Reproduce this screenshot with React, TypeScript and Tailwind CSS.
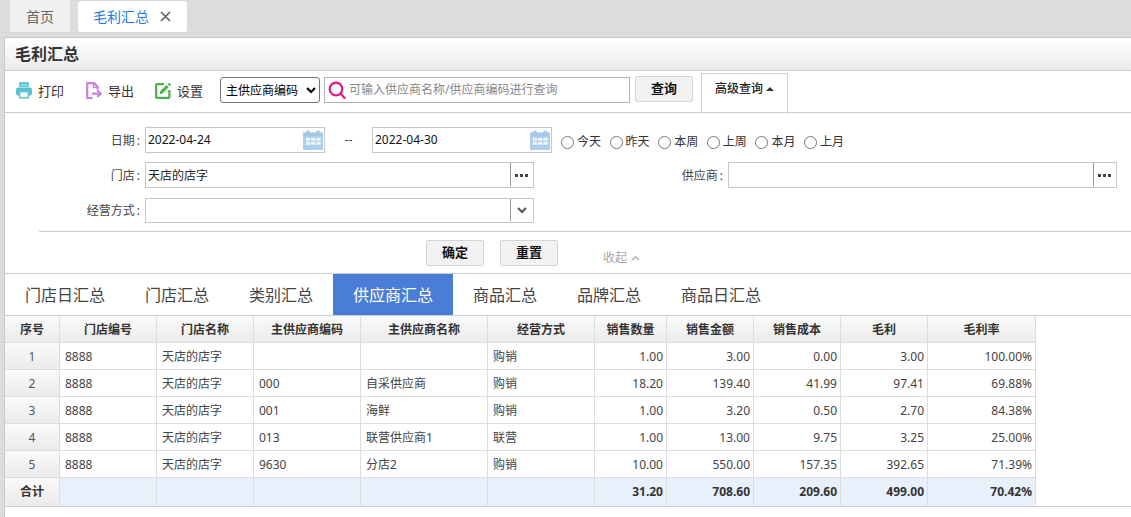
const columns = [
  { title: "序号", width: "w-[55px]" },
  { title: "门店编号", width: "w-[97px]" },
  { title: "门店名称", width: "w-[97px]" },
  { title: "主供应商编码", width: "w-[107px]" },
  { title: "主供应商名称", width: "w-[127px]" },
  { title: "经营方式", width: "w-[107px]" },
  { title: "销售数量", width: "w-[72px]" },
  { title: "销售金额", width: "w-[87px]" },
  { title: "销售成本", width: "w-[87px]" },
  { title: "毛利", width: "w-[87px]" },
  { title: "毛利率", width: "w-[108px]" },
];

const rows = [
  ["1", "8888", "天店的店字", "", "", "购销", "1.00", "3.00", "0.00", "3.00", "100.00%"],
  ["2", "8888", "天店的店字", "000", "自采供应商", "购销", "18.20", "139.40", "41.99", "97.41", "69.88%"],
  ["3", "8888", "天店的店字", "001", "海鲜", "购销", "1.00", "3.20", "0.50", "2.70", "84.38%"],
  ["4", "8888", "天店的店字", "013", "联营供应商1", "联营", "1.00", "13.00", "9.75", "3.25", "25.00%"],
  ["5", "8888", "天店的店字", "9630", "分店2", "购销", "10.00", "550.00", "157.35", "392.65", "71.39%"],
];

const totals = ["合计", "", "", "", "", "", "31.20", "708.60", "209.60", "499.00", "70.42%"];

const tabs = [
  { label: "门店日汇总" },
  { label: "门店汇总" },
  { label: "类别汇总" },
  { label: "供应商汇总", active: true },
  { label: "商品汇总" },
  { label: "品牌汇总" },
  { label: "商品日汇总" },
];

const PrinterIcon = () => (
  <svg width="16" height="17" viewBox="0 0 16 17" className="shrink-0">
    <path d="M3 5V1.5A1.5 1.5 0 0 1 4.5 0h7A1.5 1.5 0 0 1 13 1.5V5z" fill="#5bc2d1" />
    <rect x="0" y="5.6" width="16" height="7.8" rx="2" fill="#5bc2d1" />
    <rect x="3.6" y="9.6" width="8.8" height="6.2" fill="#fff" stroke="#5bc2d1" strokeWidth="1.4" />
    <rect x="4.2" y="2" width="7.6" height="2.2" fill="#8bd5e0" />
  </svg>
);

const ExportIcon = () => (
  <svg width="16" height="17" viewBox="0 0 16 17" className="shrink-0" fill="none" stroke="#cb80e2" strokeWidth="2.2">
    <path d="M6.5 16H1.2V1.1H8L11.6 4.8V7.5" strokeLinejoin="round" />
    <path d="M7.6 1.5V5.4H11.6" strokeWidth="1.5" />
    <path d="M6 11.6H14.4" />
    <path d="M11.2 8.2L14.8 11.6L11.2 15" />
  </svg>
);

const EditIcon = () => (
  <svg width="16" height="17" viewBox="0 0 16 17" className="shrink-0" fill="none">
    <path d="M9 2.2H2.2A1.2 1.2 0 0 0 1.1 3.4V14.8A1.2 1.2 0 0 0 2.2 15.9H13.3A1.2 1.2 0 0 0 14.4 14.8V8" stroke="#4caf50" strokeWidth="2.3" />
    <path d="M4.5 12.5L5.5 8.8L11.5 3L13.6 5.2L7.8 11.3z" fill="#4caf50" />
    <path d="M12.6 2L14 0.7L16 2.8L14.6 4.2z" fill="#4caf50" />
  </svg>
);

const SearchIcon = () => (
  <svg width="18" height="18" viewBox="0 0 18 18" className="shrink-0" fill="none" stroke="#e3177f" strokeWidth="2.2">
    <circle cx="8" cy="8" r="6.3" />
    <path d="M12.4 12.6L16.6 17" strokeLinecap="round" />
  </svg>
);

const CalendarIcon = () => (
  <svg width="20" height="20" viewBox="0 0 21 23" preserveAspectRatio="none" className="shrink-0">
    <rect x="0" y="3" width="21" height="20" fill="#aecfeb" />
    <rect x="3" y="0.5" width="4" height="5" rx="1" fill="#aecfeb" />
    <rect x="14" y="0.5" width="4" height="5" rx="1" fill="#aecfeb" />
    <rect x="0" y="3" width="21" height="4" fill="#a5c8e6" />
    <g fill="#eef5fb">
      <rect x="3" y="9" width="4.5" height="3.4" />
      <rect x="8.5" y="9" width="4.5" height="3.4" />
      <rect x="14" y="9" width="4.5" height="3.4" />
      <rect x="3" y="13.6" width="4.5" height="3.4" />
      <rect x="8.5" y="13.6" width="4.5" height="3.4" />
      <rect x="14" y="13.6" width="4.5" height="3.4" />
    </g>
  </svg>
);

const DotsButton = () => (
  <div className="flex items-center justify-center w-[23px] h-full relative">
    <div className="absolute left-0 top-0 bottom-[1px] w-px bg-[#999]" />
    <div className="flex gap-[2px]">
      <div className="w-[3px] h-[3px] bg-[#444]" />
      <div className="w-[3px] h-[3px] bg-[#444]" />
      <div className="w-[3px] h-[3px] bg-[#444]" />
    </div>
  </div>
);

const ChevronButton = () => (
  <div className="flex items-center justify-center w-[23px] h-full relative">
    <div className="absolute left-0 top-0 bottom-[1px] w-px bg-[#999]" />
    <svg width="10" height="7" viewBox="0 0 10 7" fill="none" stroke="#555" strokeWidth="2">
      <path d="M1 1L5 5L9 1" />
    </svg>
  </div>
);

const DateInput = ({ value }: { value: string }) => (
  <div className="flex items-center justify-between w-[180px] h-[26px] border border-[#c6c6c6] pl-[2px] pr-px">
    <span className="text-[12px] text-[#111]">{value}</span>
    <CalendarIcon />
  </div>
);

const Radio = ({ label }: { label: string }) => (
  <label className="flex items-center w-[48.6px] text-[12px] text-[#333]">
    <input type="radio" name="range" className="w-[13px] h-[13px] mr-[3px] accent-[#999] mt-px" />
    {label}
  </label>
);

const Button = ({ label, className }: { label: string; className?: string }) => (
  <button className={`w-[58px] h-[26px] rounded-[2px] border border-[#d4d4d4] bg-[#f2f2f2] text-[13px] font-bold text-[#111] ${className ?? ""}`}>
    {label}
  </button>
);

const Label = ({ text, className }: { text: string; className: string }) => (
  <div className={`mr-[5px] pt-px text-right text-[#444] ${className}`}>
    {text}
    <span className="ml-[2px]">:</span>
  </div>
);

const App = () => {
  return (
    <div className="w-full h-[517px] overflow-hidden bg-[#dcdcdc] bg-[repeating-linear-gradient(0deg,#d9d9d9_0px,#d9d9d9_1px,#dfdfdf_1px,#dfdfdf_2px)] font-['Noto_Sans','Noto_Sans_CJK_SC',sans-serif] text-[#333]">
      <div className="flex items-start h-[37px] pl-[10px] gap-[8px]">
        <div className="flex items-center justify-center w-[60px] h-[32px] rounded-b-[3px] bg-[#f0f0f0] text-[14px] text-[#666]">
          首页
        </div>
        <div className="flex items-center w-[109px] h-[31px] mt-px rounded-[3px] bg-white pl-[15px] text-[14px] text-[#1e7be0]">
          毛利汇总
          <svg width="11" height="11" viewBox="0 0 11 11" className="ml-[11px]" fill="none" stroke="#666" strokeWidth="1.7">
            <path d="M1 1L10 10M10 1L1 10" />
          </svg>
        </div>
      </div>

      <div className="ml-[4px] h-[480px] bg-white border-l border-t border-[#c9c9c9]">
        <div className="flex items-center h-[33px] pl-[10px] border-b border-[#ccc] bg-gradient-to-b from-white to-[#ececec] text-[16px] font-bold text-[#333]">
          毛利汇总
        </div>

        <div className="flex items-start h-[42px] pl-[11px] border-b border-[#ccc] text-[13px] text-[#333]">
          <div className="flex items-center gap-[6px] mt-[9px]">
            <PrinterIcon />
            <span className="pt-[2px]">打印</span>
          </div>
          <div className="flex items-center gap-[6px] mt-[9px] ml-[22px]">
            <ExportIcon />
            <span className="pt-[2px]">导出</span>
          </div>
          <div className="flex items-center gap-[6px] mt-[9px] ml-[21px]">
            <EditIcon />
            <span className="pt-[2px]">设置</span>
          </div>
          <select className="w-[100px] h-[26px] mt-[6px] ml-[17px] pl-[1px] bg-white border border-[#767676] rounded-[3px] text-[12px] text-black">
            <option>主供应商编码</option>
          </select>
          <div className="flex items-center w-[306px] h-[26px] mt-[6px] ml-[4px] pl-[3px] gap-[3px] border border-[#b4b4b4]">
            <SearchIcon />
            <input
              className="flex-1 min-w-0 text-[12px] outline-none placeholder:text-[#888]"
              placeholder="可输入供应商名称/供应商编码进行查询"
            />
          </div>
          <Button label="查询" className="mt-[5px] ml-[5px]" />
          <div className="flex items-start justify-center gap-[3px] w-[87px] h-[41px] mt-[2px] pt-[6px] ml-[8px] border-x border-t border-[#d0d0d0] text-[12px] font-medium text-[#222]">
            高级查询
            <div className="w-0 h-0 mt-[7px] border-x-[4px] border-x-transparent border-b-[4px] border-b-[#333]" />
          </div>
        </div>

        <div className="h-[161px] pt-[14px] border-b border-[#ccc] text-[12px]">
          <div className="flex items-center h-[26px]">
            <Label text="日期" className="w-[135px]" />
            <DateInput value="2022-04-24" />
            <div className="w-[47px] text-center text-[#444]">--</div>
            <DateInput value="2022-04-30" />
            <div className="flex ml-[9px] mt-[4px]">
              {["今天", "昨天", "本周", "上周", "本月", "上月"].map((label) => (
                <Radio key={label} label={label} />
              ))}
            </div>
          </div>

          <div className="flex items-center h-[26px] mt-[9px]">
            <Label text="门店" className="w-[135px]" />
            <div className="flex items-center w-[389px] h-full border border-[#c6c6c6]">
              <div className="flex-1 pl-[2px] pt-px text-[#222]">天店的店字</div>
              <DotsButton />
            </div>
            <Label text="供应商" className="w-[189px]" />
            <div className="flex items-center justify-end w-[389px] h-full border border-[#c6c6c6]">
              <DotsButton />
            </div>
          </div>

          <div className="flex items-center h-[25px] mt-[10px]">
            <Label text="经营方式" className="w-[135px]" />
            <div className="flex items-center justify-end w-[389px] h-full border border-[#c6c6c6]">
              <ChevronButton />
            </div>
          </div>

          <div className="h-px ml-[34px] mt-[8px] bg-[#ccc]" />

          <div className="flex items-start mt-[8px] pl-[421px]">
            <Button label="确定" />
            <Button label="重置" className="ml-[16px]" />
            <div className="flex items-center gap-[4px] ml-[45px] mt-[9px] text-[#aaa]">
              收起
              <svg width="9" height="6" viewBox="0 0 9 6" fill="none" stroke="#aaa" strokeWidth="1.2">
                <path d="M1 5L4.5 1.5L8 5" />
              </svg>
            </div>
          </div>
        </div>

        <div className="flex h-[42px] border-b border-[#ccc] text-[16px]">
          {tabs.map((tab) => (
            <div
              key={tab.label}
              className={`flex items-center px-[20px] ${tab.active ? "bg-[#4a7dd6] text-white" : "text-[#444]"}`}
            >
              {tab.label}
            </div>
          ))}
        </div>

        <div className="border-b border-[#ccc] h-[191px]">
          <table className="table-fixed border-separate border-spacing-0 w-[1031px] text-[12px]">
            <thead>
              <tr>
                {columns.map((col) => (
                  <th
                    key={col.title}
                    className={`${col.width} h-[27px] p-0 pt-[2px] border-r border-b border-[#ddd] bg-gradient-to-b from-[#fafafa] to-[#ebebeb] font-bold text-[#333] text-center`}
                  >
                    {col.title}
                  </th>
                ))}
              </tr>
            </thead>
            <tbody>
              {rows.map((row) => (
                <tr key={row[0]}>
                  {row.map((cell, i) => (
                    <td
                      key={i}
                      className={
                        i === 0
                          ? "h-[27px] p-0 pt-[2px] border-r border-b border-[#ddd] bg-gradient-to-b from-[#fafafa] to-[#ebebeb] text-center text-[#555]"
                          : i >= 6
                            ? "h-[27px] p-0 pt-[2px] pr-[3px] border-r border-b border-[#ddd] text-right text-[#444]"
                            : "h-[27px] p-0 pt-[2px] pl-[5px] border-r border-b border-[#ddd] text-left text-[#444]"
                      }
                    >
                      {cell}
                    </td>
                  ))}
                </tr>
              ))}
              <tr>
                {totals.map((cell, i) => (
                  <td
                    key={i}
                    className={
                      i === 0
                        ? "h-[28px] p-0 border-r border-[#ddd] bg-gradient-to-b from-[#fafafa] to-[#ebebeb] text-center font-bold text-[#333]"
                        : "h-[28px] p-0 pr-[3px] border-r border-[#ddd] bg-[#e8f0fc] text-right font-bold text-[#333]"
                    }
                  >
                    {cell}
                  </td>
                ))}
              </tr>
            </tbody>
          </table>
        </div>
      </div>
    </div>
  );
};

export default App;
